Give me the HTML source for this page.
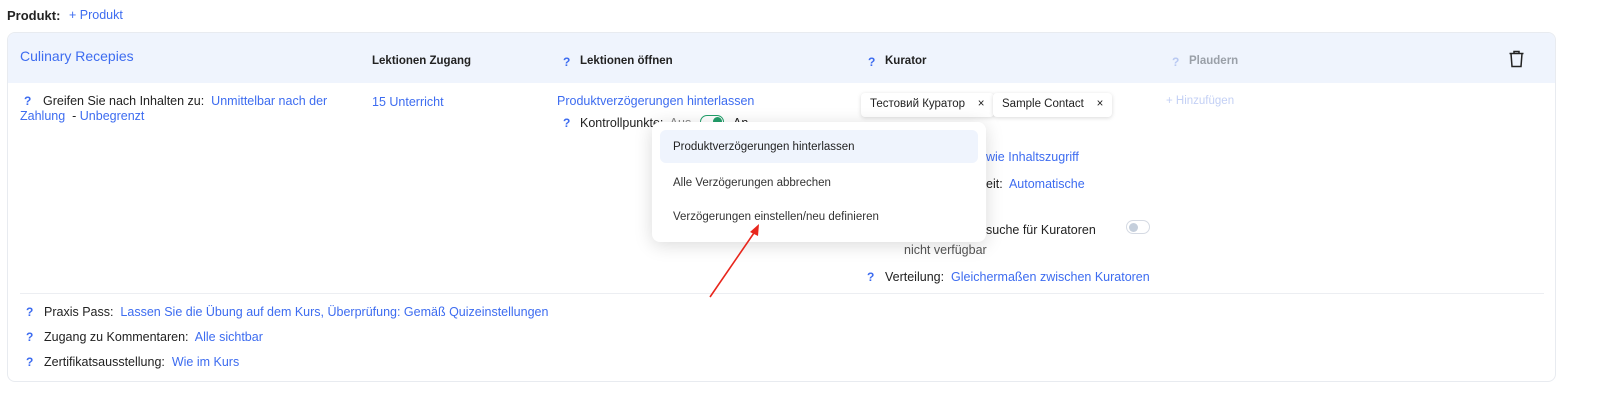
<!DOCTYPE html>
<html><head><meta charset="utf-8"><style>
*{margin:0;padding:0;box-sizing:border-box}
body{width:1600px;height:404px;background:#fff;font-family:"Liberation Sans",sans-serif;font-size:12.5px;color:#222;position:relative;overflow:hidden}
.a{position:absolute;white-space:nowrap}
.l{color:#3d6cf0}
.q{color:#3d6cf0;font-weight:bold;font-size:12px}
.b{font-weight:bold;font-size:11.5px}
.card{position:absolute;left:7px;top:32px;width:1549px;height:350px;border:1px solid #e8ebf0;border-radius:8px;overflow:hidden}
.hdr{position:absolute;left:0;top:0;width:100%;height:50px;background:#eff4fd}
.tag{position:absolute;top:93px;height:24px;background:#fff;border-radius:4px;box-shadow:0 1px 4px rgba(0,0,0,.15);font-size:11.5px;padding:5px 9px;white-space:nowrap}
.pop{position:absolute;left:652px;top:122px;width:334px;height:120px;background:#fff;border-radius:8px;box-shadow:0 3px 18px rgba(0,0,0,.15)}
.pop div{position:absolute;left:21px;font-size:11.5px;color:#333}
</style></head><body>
<div class="a" style="left:7px;top:8px;font-weight:bold;font-size:13px">Produkt:</div>
<div class="a l" style="left:69px;top:8px;font-size:12.5px">+ Produkt</div>
<div class="card"><div class="hdr"></div>
<div style="position:absolute;left:12px;top:260px;width:1524px;height:1px;background:#eceef2"></div></div>
<div class="a l" style="left:20px;top:48px;font-size:14px">Culinary Recepies</div>
<div class="a b" style="left:372px;top:55px">Lektionen Zugang</div>
<div class="a q" style="left:563px;top:55px">?</div><div class="a b" style="left:580px;top:55px">Lektionen öffnen</div>
<div class="a q" style="left:868px;top:55px">?</div><div class="a b" style="left:885px;top:55px">Kurator</div>
<div class="a q" style="left:1172px;top:55px;color:#b9c9f2">?</div><div class="a b" style="left:1189px;top:55px;color:#9aa0a8">Plaudern</div>
<svg class="a" style="left:1508px;top:50px" width="17" height="18" viewBox="0 0 17 18" fill="none" stroke="#222" stroke-width="1.5"><path d="M1.5 3.5h14M6 3.5V1.5h5v2M3 3.5l1 13h9l1-13"/></svg>
<div class="a q" style="left:24px;top:94px">?</div>
<div class="a" style="left:43px;top:94px">Greifen Sie nach Inhalten zu:&nbsp; <span class="l">Unmittelbar nach der</span></div>
<div class="a" style="left:20px;top:109px"><span class="l">Zahlung</span> &nbsp;- <span class="l">Unbegrenzt</span></div>
<div class="a l" style="left:372px;top:95px">15 Unterricht</div>
<div class="a l" style="left:557px;top:94px">Produktverzögerungen hinterlassen</div>
<div class="a q" style="left:563px;top:116px">?</div>
<div class="a" style="left:580px;top:116px">Kontrollpunkte:&nbsp; <span style="color:#888">Aus</span></div>
<div class="a" style="left:700px;top:115px;width:24px;height:14px;border:1.5px solid #22a06b;border-radius:8px"><div style="position:absolute;right:1px;top:1px;width:9px;height:9px;border-radius:50%;background:#22a06b"></div></div>
<div class="a" style="left:733px;top:116px">An</div>
<div class="tag" style="left:861px">Тестовий Куратор &nbsp;&nbsp; ×</div>
<div class="tag" style="left:993px">Sample Contact &nbsp;&nbsp; ×</div>
<div class="a" style="left:1166px;top:95px;color:#c3d0f5;font-size:11.5px">+ Hinzufügen</div>
<div class="a l" style="left:986px;top:150px">wie Inhaltszugriff</div>
<div class="a" style="left:986px;top:177px">eit:&nbsp; <span class="l">Automatische</span></div>
<div class="a" style="left:986px;top:223px">suche für Kuratoren</div>
<div class="a" style="left:1126px;top:220px;width:24px;height:14px;border:1px solid #d5dae3;border-radius:8px"><div style="position:absolute;left:2px;top:2px;width:9px;height:9px;border-radius:50%;background:#c5cfdc"></div></div>
<div class="a" style="left:904px;top:243px;color:#555">nicht verfügbar</div>
<div class="a q" style="left:867px;top:270px">?</div>
<div class="a" style="left:885px;top:270px">Verteilung:&nbsp; <span class="l">Gleichermaßen zwischen Kuratoren</span></div>
<div class="pop">
<div style="left:8px;top:8px;width:318px;height:33px;background:#eff4fd;border-radius:6px"></div>
<div style="top:19px;color:#222">Produktverzögerungen hinterlassen</div>
<div style="top:55px">Alle Verzögerungen abbrechen</div>
<div style="top:89px">Verzögerungen einstellen/neu definieren</div>
</div>
<svg class="a" style="left:705px;top:220px" width="60" height="80"><path d="M5 77L51 10" stroke="#e8261c" stroke-width="1.6"/><path d="M54 4L45 12L53 16Z" fill="#e8261c"/></svg>
<div class="a q" style="left:26px;top:305px">?</div>
<div class="a" style="left:44px;top:305px">Praxis Pass:&nbsp; <span class="l">Lassen Sie die Übung auf dem Kurs, Überprüfung: Gemäß Quizeinstellungen</span></div>
<div class="a q" style="left:26px;top:330px">?</div>
<div class="a" style="left:44px;top:330px">Zugang zu Kommentaren:&nbsp; <span class="l">Alle sichtbar</span></div>
<div class="a q" style="left:26px;top:355px">?</div>
<div class="a" style="left:44px;top:355px">Zertifikatsausstellung:&nbsp; <span class="l">Wie im Kurs</span></div>
</body></html>
